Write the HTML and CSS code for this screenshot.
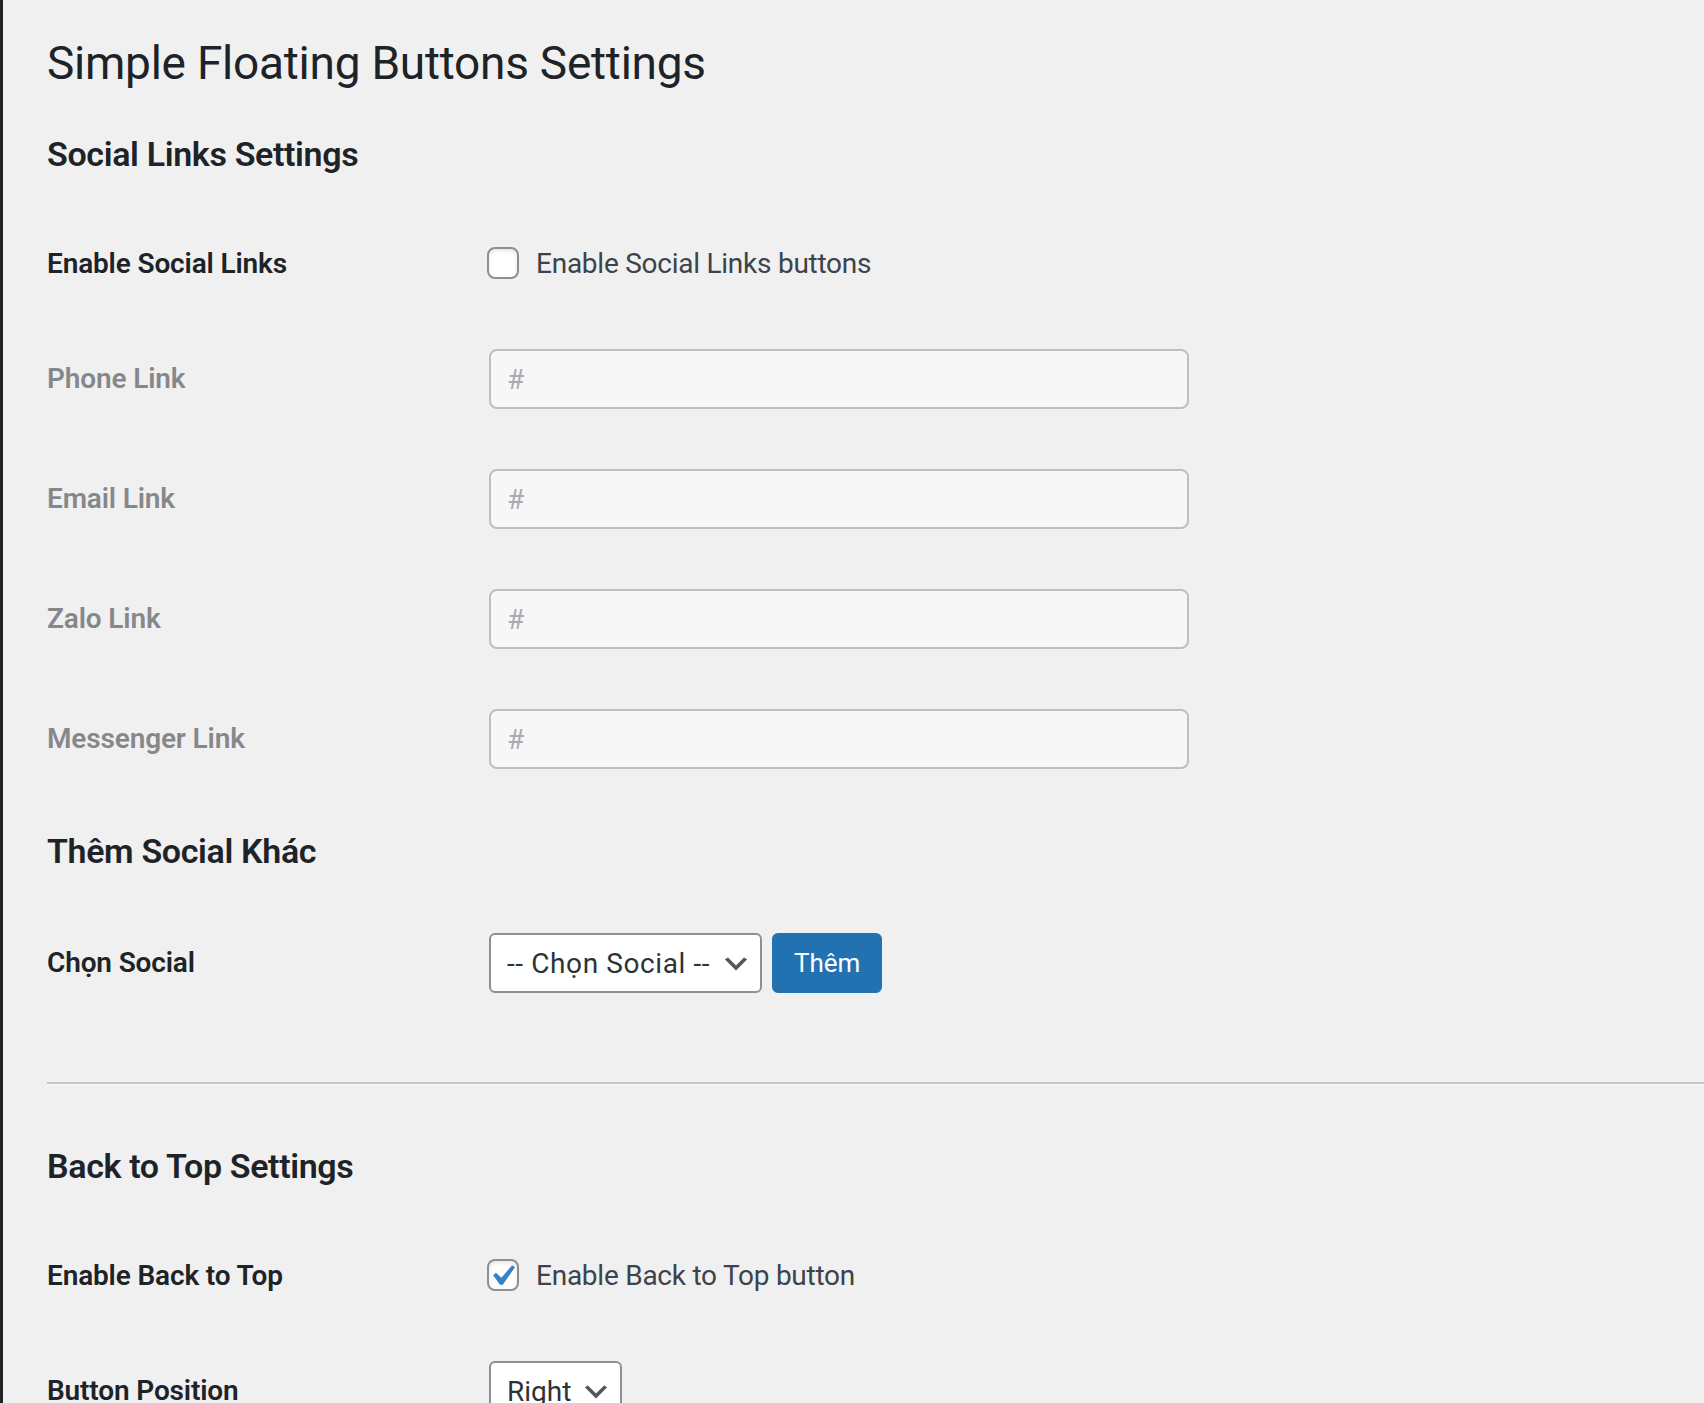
FILE: index.html
```html
<!DOCTYPE html>
<html lang="vi">
<head>
<meta charset="utf-8">
<title>Simple Floating Buttons Settings</title>
<link rel="stylesheet" href="styles.css">
</head>
<body>
<div class="screen">
  <div class="menu-edge"></div>
  <main class="wrap">
    <h1 class="page-title">Simple Floating Buttons Settings</h1>
    <form class="settings-form">
      <h2 class="section-title">Social Links Settings</h2>
      <div class="form-table">
        <div class="row row-check">
          <div class="th">Enable Social Links</div>
          <div class="td">
            <label class="check">
              <span class="box"></span>
              <span class="check-text">Enable Social Links buttons</span>
            </label>
          </div>
        </div>
        <div class="row is-disabled">
          <div class="th">Phone Link</div>
          <div class="td"><input class="text-input" type="text" placeholder="#" disabled></div>
        </div>
        <div class="row is-disabled">
          <div class="th">Email Link</div>
          <div class="td"><input class="text-input" type="text" placeholder="#" disabled></div>
        </div>
        <div class="row is-disabled">
          <div class="th">Zalo Link</div>
          <div class="td"><input class="text-input" type="text" placeholder="#" disabled></div>
        </div>
        <div class="row is-disabled">
          <div class="th">Messenger Link</div>
          <div class="td"><input class="text-input" type="text" placeholder="#" disabled></div>
        </div>
      </div>

      <h2 class="section-title">Thêm Social Khác</h2>
      <div class="form-table">
        <div class="row">
          <div class="th">Chọn Social</div>
          <div class="td">
            <div class="field-inline">
              <span class="select-wrap">
                <select class="select select-social">
                  <option>-- Chọn Social --</option>
                </select>
                <svg class="chev" viewBox="0 0 20 20" aria-hidden="true"><path d="M5 6l5 5 5-5 2 1-7 7-7-7 2-1z"/></svg>
              </span>
              <button type="button" class="button-primary">Thêm</button>
            </div>
          </div>
        </div>
      </div>

      <hr class="divider">

      <h2 class="section-title">Back to Top Settings</h2>
      <div class="form-table">
        <div class="row row-check">
          <div class="th">Enable Back to Top</div>
          <div class="td">
            <label class="check">
              <span class="box is-checked">
                <svg class="tick" viewBox="0 0 20 20" aria-hidden="true"><path d="M14.83 4.89l1.34.94-5.81 8.38H9.02L5.78 9.67l1.34-1.25 2.57 2.4z"/></svg>
              </span>
              <span class="check-text">Enable Back to Top button</span>
            </label>
          </div>
        </div>
        <div class="row">
          <div class="th">Button Position</div>
          <div class="td">
            <span class="select-wrap">
              <select class="select select-position">
                <option>Right</option>
                <option>Left</option>
              </select>
              <svg class="chev" viewBox="0 0 20 20" aria-hidden="true"><path d="M5 6l5 5 5-5 2 1-7 7-7-7 2-1z"/></svg>
            </span>
          </div>
        </div>
        <div class="row">
          <div class="th">Button Color</div>
          <div class="td"><input class="text-input" type="text" value="#2271b1"></div>
        </div>
      </div>
    </form>
  </main>
</div>
</body>
</html>
```

FILE: styles.css
```css
html, body {
  margin: 0;
  height: 100%;
}

body {
  background: #f0f0f1;
  font-family: Roboto, "Liberation Sans", sans-serif;
  color: #3c434a;
}

.screen {
  display: flex;
  height: 100vh;
  overflow: hidden;
}

.menu-edge {
  flex: 0 0 3px;
  background: #1d2327;
}

.wrap {
  flex: 1;
  min-width: 0;
  padding: 16px 0 0 44px;
}

.page-title {
  margin: 0;
  padding: 18px 0 8px;
  font-size: 46px;
  line-height: 59.8px;
  font-weight: 400;
  letter-spacing: -0.25px;
  color: #1d2327;
}

.section-title {
  margin: 33.8px 0;
  font-size: 34px;
  line-height: 36.4px;
  font-weight: 600;
  letter-spacing: -0.35px;
  color: #1d2327;
}

.form-table {
  display: flex;
  flex-direction: column;
}

.row {
  display: flex;
  align-items: flex-start;
}

.th {
  flex: 0 0 400px;
  padding: 42px 20px 38px 0;
  font-size: 28px;
  line-height: 36.4px;
  font-weight: 600;
  letter-spacing: -0.15px;
  color: #1d2327;
}

.row-check .th {
  padding: 40px 20px 37px 0;
}

.td {
  flex: 1;
  padding: 30px 20px;
  font-size: 28px;
  line-height: 36.4px;
}

.is-disabled {
  opacity: 0.5;
}

.text-input {
  display: block;
  box-sizing: border-box;
  width: 700px;
  height: 60px;
  margin: 0 2px;
  padding: 0 16px;
  border: 2px solid #8c8f94;
  border-radius: 8px;
  background: #fff;
  font-family: inherit;
  font-size: 28px;
  color: #2c3338;
}

.text-input::placeholder {
  color: #646970;
  opacity: 1;
}

.check {
  display: flex;
  align-items: flex-start;
  margin-top: 10px;
  color: #3c434a;
}

.check-text {
  letter-spacing: -0.25px;
}

.box {
  position: relative;
  flex: 0 0 32px;
  box-sizing: border-box;
  width: 32px;
  height: 32px;
  margin: 1.5px 17px 0 0;
  border: 2px solid #8c8f94;
  border-radius: 8px;
  background: #fff;
  box-shadow: inset 0 2px 4px rgba(0, 0, 0, 0.1);
}

.tick {
  position: absolute;
  left: -8px;
  top: -6px;
  width: 42px;
  height: 42px;
  fill: #3582c4;
}

.field-inline {
  display: flex;
  align-items: center;
  gap: 8px;
}

.select-wrap {
  position: relative;
  display: inline-block;
  margin: 0 2px;
  vertical-align: top;
}

.select {
  -webkit-appearance: none;
  appearance: none;
  display: block;
  box-sizing: border-box;
  height: 60px;
  padding: 0 48px 0 16px;
  border: 2px solid #8c8f94;
  border-radius: 6px;
  background: #fff;
  font-family: inherit;
  font-size: 28px;
  color: #2c3338;
}

.select-social {
  width: 273px;
  letter-spacing: 0.6px;
}

.select-position {
  width: 133px;
}

.chev {
  position: absolute;
  right: 10px;
  top: 15px;
  width: 32px;
  height: 32px;
  fill: #50575e;
  pointer-events: none;
}

.button-primary {
  box-sizing: border-box;
  height: 60px;
  padding: 0 20px;
  border: 2px solid #2271b1;
  border-radius: 6px;
  background: #2271b1;
  color: #fff;
  font-family: inherit;
  font-size: 26px;
}

.divider {
  height: 0;
  margin: 59px 0 61.5px;
  border: 0;
  border-top: 2px solid #c8c9cb;
  border-bottom: 2px solid #f6f7f7;
}
```
